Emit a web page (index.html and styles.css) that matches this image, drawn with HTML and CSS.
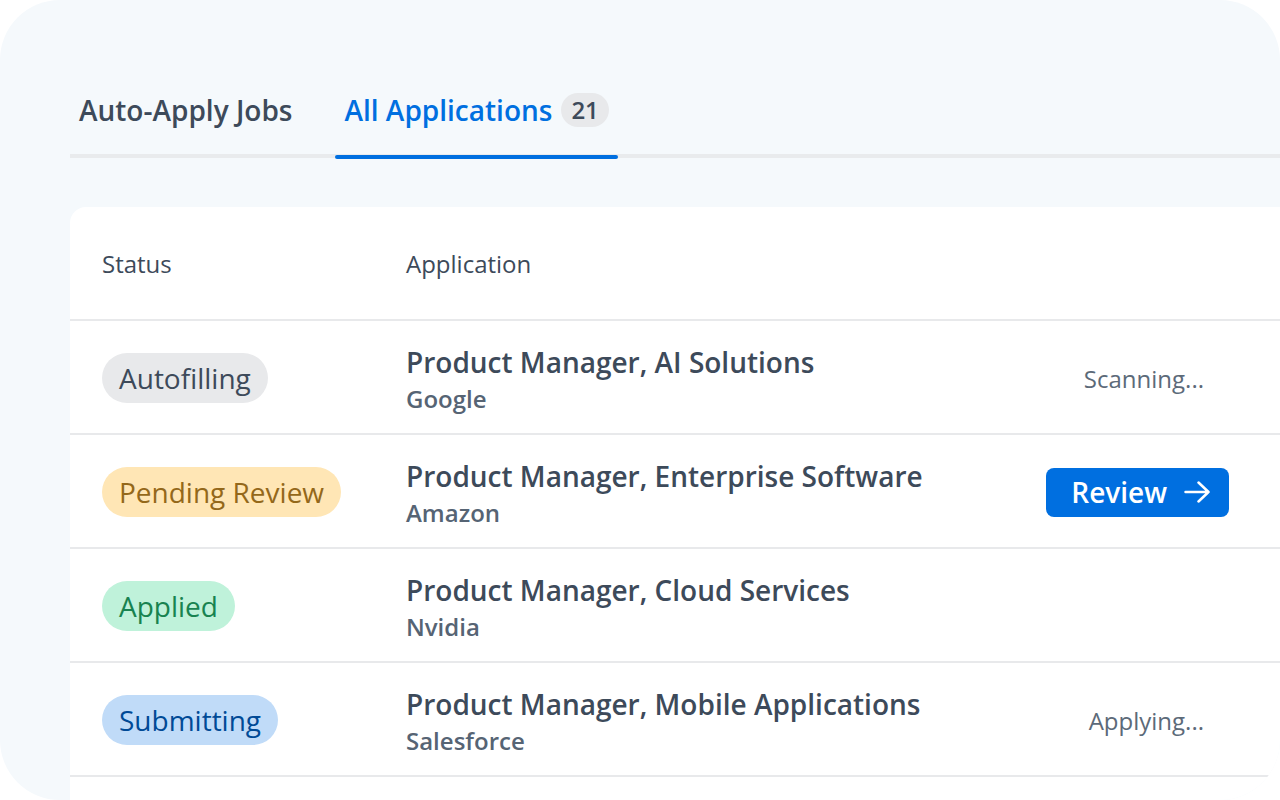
FILE: index.html
```html
<!DOCTYPE html>
<html lang="en">
<head>
  <meta charset="UTF-8" />
  <meta name="viewport" content="width=device-width, initial-scale=1.0"/>
  <title>All Applications</title>
  <link rel="stylesheet" href="styles.css">
</head>
<body>

  <main class="panel">
    <nav class="tabs">
      <a class="tab" href="#auto-apply">Auto-Apply Jobs</a>
      <a class="tab active" href="#all">All Applications <span class="count">21</span></a>
    </nav>

    <div class="card">
      <table class="applications">
        <thead>
          <tr>
            <th class="col-status">Status</th>
            <th>Application</th>
            <th class="col-action"></th>
          </tr>
        </thead>
        <tbody>
          <tr>
            <td><span class="pill autofilling">Autofilling</span></td>
            <td class="job">
              <div class="title">Product Manager, AI Solutions</div>
              <div class="company">Google</div>
            </td>
            <td class="action"><span class="progress">Scanning...</span></td>
          </tr>
          <tr>
            <td><span class="pill pending">Pending Review</span></td>
            <td class="job">
              <div class="title">Product Manager, Enterprise Software</div>
              <div class="company">Amazon</div>
            </td>
            <td class="action">
              <button class="review" type="button">
                Review
                <svg width="26" height="24" viewBox="0 0 26 24" fill="none" stroke="#fff" stroke-width="2.5" stroke-linecap="round" stroke-linejoin="round" aria-hidden="true">
                  <path d="M1.5 12H24.5M14.5 2.5L24.5 12L14.5 21.5"/>
                </svg>
              </button>
            </td>
          </tr>
          <tr>
            <td><span class="pill applied">Applied</span></td>
            <td class="job">
              <div class="title">Product Manager, Cloud Services</div>
              <div class="company">Nvidia</div>
            </td>
            <td></td>
          </tr>
          <tr>
            <td><span class="pill submitting">Submitting</span></td>
            <td class="job">
              <div class="title">Product Manager, Mobile Applications</div>
              <div class="company">Salesforce</div>
            </td>
            <td class="action"><span class="progress">Applying...</span></td>
          </tr>
        </tbody>
      </table>
    </div>
  </main>

</body>
</html>
```
FILE: styles.css
```css
body {
  font-family: "Open Sans", sans-serif;
  margin: 0;
  background: #fff;
  color: #3d4a5a;
}
.panel {
  box-sizing: border-box;
  height: 100vh;
  padding: 80px 0 0 70px;
  background: #f5f9fc;
  border-radius: 60px;
  overflow: hidden;
}
.tabs {
  display: flex;
  gap: 34px;
  margin-bottom: 49px;
  border-bottom: 4px solid #e9ebed;
}
.tab {
  display: flex;
  align-items: center;
  gap: 9px;
  height: 60px;
  padding: 0 9px 14px;
  color: #3d4a5a;
  font-size: 28px;
  font-weight: 600;
  text-decoration: none;
}
.tab.active {
  position: relative;
  color: #006fe0;
}
.tab.active::after {
  content: "";
  position: absolute;
  left: 0;
  right: 0;
  bottom: -5px;
  height: 4px;
  border-radius: 2px;
  background: #006fe0;
}
.count {
  padding: 0 10px;
  border-radius: 17px;
  background: #e8e9eb;
  color: #3d4a5a;
  font-size: 24px;
  line-height: 34px;
}
.card {
  min-height: 100%;
  background: #fff;
  border-radius: 16px 0 0 0;
}
.applications {
  width: 100%;
  border-collapse: separate;
  border-spacing: 0;
  text-align: left;
}
th, td {
  box-sizing: border-box;
  height: 114px;
  padding: 0 32px;
  border-bottom: 2px solid #e8e9eb;
  white-space: nowrap;
}
td {
  padding-top: 2px;
}
th {
  font-size: 24px;
  font-weight: 400;
}
.col-status {
  width: 304px;
}
.col-action {
  width: 280px;
}
.pill {
  display: inline-block;
  padding: 0 17px;
  border-radius: 25px;
  font-size: 28px;
  line-height: 50px;
}
.autofilling {
  background: #e8e9eb;
}
.pending {
  background: #ffe6b5;
  color: #94681a;
}
.applied {
  background: #bff2da;
  color: #188350;
}
.submitting {
  background: #c0dbf8;
  color: #004a96;
}
.job {
  padding-top: 6px;
}
.title {
  font-size: 28px;
  font-weight: 600;
  line-height: 38px;
}
.company {
  color: #566474;
  font-size: 24px;
  font-weight: 600;
  line-height: 36px;
}
.action {
  padding-right: 51px;
  text-align: right;
}
.progress {
  padding-right: 25px;
  color: #5c6a79;
  font-size: 24px;
}
.review {
  display: inline-flex;
  align-items: center;
  gap: 17px;
  height: 49px;
  padding: 0 19px 0 25px;
  border: none;
  border-radius: 8px;
  background: #006fe0;
  color: #fff;
  font-family: inherit;
  font-size: 28px;
  font-weight: 600;
  cursor: pointer;
}
```
